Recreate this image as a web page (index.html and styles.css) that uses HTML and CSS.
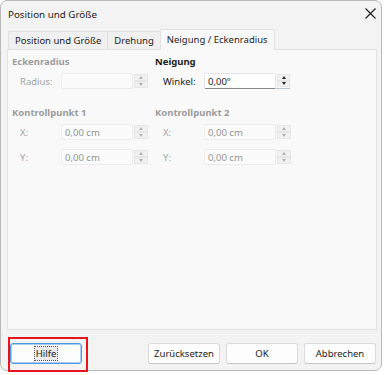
FILE: index.html
```html
<!DOCTYPE html>
<html lang="de">
<head>
    <meta charset="UTF-8">
    <title>Position und Größe</title>
    <link rel="stylesheet" href="styles.css">
</head>
<body>
    <div class="window">
        <div class="titlebar">
            <span class="title">Position und Größe</span>
            <svg class="close" width="11" height="11" viewBox="0 0 11 11">
                <path d="M0.5 0.5 L10.5 10.5 M10.5 0.5 L0.5 10.5" stroke="#1a1a1a" stroke-width="1.1" fill="none"/>
            </svg>
        </div>

        <div class="tabs">
            <div class="tab">Position und Größe</div>
            <div class="tab">Drehung</div>
            <div class="tab active">Neigung / Eckenradius</div>
        </div>

        <div class="panel">
            <div class="group disabled">
                <div class="heading">Eckenradius</div>
                <div class="row">
                    <span class="label">Radius:</span>
                    <div class="field">
                        <div class="input"></div>
                        <div class="spin"><span class="up"></span><span class="down"></span></div>
                    </div>
                </div>
            </div>

            <div class="group">
                <div class="heading">Neigung</div>
                <div class="row">
                    <span class="label">Winkel:</span>
                    <div class="field focus">
                        <div class="input">0,00°</div>
                        <div class="spin"><span class="up"></span><span class="down"></span></div>
                    </div>
                </div>
            </div>

            <div class="group disabled">
                <div class="heading">Kontrollpunkt 1</div>
                <div class="row">
                    <span class="label">X:</span>
                    <div class="field">
                        <div class="input">0,00 cm</div>
                        <div class="spin"><span class="up"></span><span class="down"></span></div>
                    </div>
                </div>
                <div class="row">
                    <span class="label">Y:</span>
                    <div class="field">
                        <div class="input">0,00 cm</div>
                        <div class="spin"><span class="up"></span><span class="down"></span></div>
                    </div>
                </div>
            </div>

            <div class="group disabled">
                <div class="heading">Kontrollpunkt 2</div>
                <div class="row">
                    <span class="label">X:</span>
                    <div class="field">
                        <div class="input">0,00 cm</div>
                        <div class="spin"><span class="up"></span><span class="down"></span></div>
                    </div>
                </div>
                <div class="row">
                    <span class="label">Y:</span>
                    <div class="field">
                        <div class="input">0,00 cm</div>
                        <div class="spin"><span class="up"></span><span class="down"></span></div>
                    </div>
                </div>
            </div>
        </div>

        <div class="footer">
            <button class="btn default"><span class="focus-text">Hilfe</span></button>
            <button class="btn push">Zurücksetzen</button>
            <button class="btn">OK</button>
            <button class="btn">Abbrechen</button>
        </div>

        <!-- red marker round the help button -->
        <div class="highlight"></div>
    </div>
</body>
</html>
```

FILE: styles.css
```css
body {
    margin: 0;
    width: 384px;
    height: 375px;
    background-color: #fff;
    font-family: "Noto Sans", "DejaVu Sans", sans-serif;
    font-size: 9.5px;
    color: #1b1b1b;
    overflow: hidden;
}
.window {
    position: relative;
    box-sizing: border-box;
    width: 382px;
    height: 371px;
    border: 1px solid #b9b9b9;
    border-radius: 7px;
    background-color: #f3f3f3;
    display: flex;
    flex-direction: column;
}
.titlebar {
    height: 29px;
    display: flex;
    align-items: center;
    justify-content: space-between;
    padding: 0 5px 0 7px;
}
.title {
    font-size: 9.8px;
    margin-top: -3px;
}
.close {
    margin-top: -4px;
}
.tabs {
    height: 19px;
    display: flex;
    align-items: flex-end;
    padding-left: 7px;
}
.tab {
    box-sizing: border-box;
    height: 18px;
    line-height: 17px;
    padding: 0 6px;
    border: 1px solid #e1e1e1;
    border-bottom: none;
    margin-right: -1px;
    background-color: #f0f0f0;
}
.tab.active {
    line-height: 19px;
    background-color: #f9f9f9;
    position: relative;
    z-index: 1;
    margin-bottom: -1px;
    height: 21px;
}
.panel {
    box-sizing: border-box;
    height: 281px;
    margin: 0 4px 0 6px;
    border: 1px solid #e1e1e1;
    background-color: #f9f9f9;
    padding: 5px 0 0 4px;
    display: grid;
    grid-template-columns: 143px 1fr;
    grid-template-rows: 51px auto;
    align-content: start;
}
.heading {
    font-weight: 700;
    line-height: 14px;
    height: 14px;
}
.row {
    display: flex;
    align-items: center;
    margin-top: 4px;
}
.row + .row {
    margin-top: 9px;
}
.label {
    width: 41px;
    padding-left: 8px;
}
.field {
    display: flex;
    height: 16px;
}
.input {
    box-sizing: border-box;
    width: 72px;
    height: 16px;
    line-height: 15px;
    padding-left: 3px;
    background-color: #fbfbfb;
    border: 1px solid #ececec;
    border-radius: 2px;
}
.field.focus .input {
    background-color: #fff;
    border-color: #e5e5e5;
    border-bottom-color: #8a8a8a;
    border-radius: 2px 0 0 2px;
}
.spin {
    width: 14px;
    margin-left: 1px;
    display: flex;
    flex-direction: column;
    justify-content: space-between;
    padding: 1px 0;
    box-sizing: border-box;
}
.field.focus .spin {
    border-bottom: 1px solid #b7c6d4;
    margin-left: 0;
    padding-left: 1px;
}
.up, .down {
    height: 6px;
    background-color: #f1f1f1;
    border: 1px solid #e6e6e6;
    display: flex;
    align-items: center;
    justify-content: center;
}
.up::after {
    content: "";
    border-left: 2px solid transparent;
    border-right: 2px solid transparent;
    border-bottom: 3px solid #b0b0b0;
}
.down::after {
    content: "";
    border-left: 2px solid transparent;
    border-right: 2px solid transparent;
    border-top: 3px solid #b0b0b0;
}
.field.focus .up::after {
    border-bottom-color: #222;
}
.field.focus .down::after {
    border-top-color: #222;
}
.group.disabled {
    color: #a3a3a3;
}
.group.disabled .heading {
    color: #9c9c9c;
}
.group.disabled .input {
    color: #949494;
}
.footer {
    display: flex;
    gap: 6px;
    padding: 13px 5px 0 9px;
}
.btn {
    box-sizing: border-box;
    width: 72px;
    height: 21px;
    font-family: inherit;
    font-size: 9.5px;
    color: #1b1b1b;
    background-color: #fdfdfd;
    border: 1px solid #dadada;
    border-bottom-color: #c4c4c4;
    border-radius: 3px;
    padding: 0;
}
.btn.push {
    margin-left: auto;
}
.btn.default {
    border: 1px solid #4c9be0;
    box-shadow: inset 0 0 0 1px #a8cdf0;
}
.focus-text {
    outline: 1px dotted #555;
    background-color: #ececec;
    padding: 0 1px;
}
.highlight {
    position: absolute;
    left: 7px;
    top: 336px;
    width: 76px;
    height: 31px;
    border: 2px solid #e8141c;
}
```
